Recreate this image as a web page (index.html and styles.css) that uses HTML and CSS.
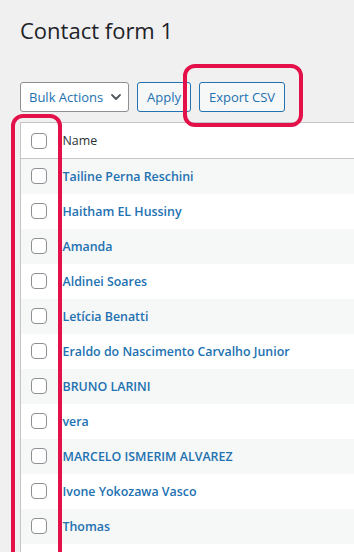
FILE: index.html
```html
<!DOCTYPE html>
<html lang="pt-BR">
<head>
    <meta charset="UTF-8">
    <meta name="viewport" content="width=device-width, initial-scale=1.0">
    <title>Contact form 1</title>
    <link rel="stylesheet" href="styles.css">
</head>
<body>
    <div class="wrap">
        <h1 class="page-title">Contact form 1</h1>

        <!-- barra de ações acima da tabela -->
        <div class="tablenav">
            <div class="select-box">
                <span>Bulk Actions</span>
                <svg class="chevron" width="12" height="12" viewBox="0 0 12 12">
                    <path d="M2 4 L6 8 L10 4" fill="none" stroke="#50575e" stroke-width="1.8" stroke-linecap="round" stroke-linejoin="round"/>
                </svg>
            </div>
            <button class="button">Apply</button>
            <button class="button">Export CSV</button>
        </div>

        <table class="entries">
            <thead>
                <tr>
                    <td class="check-column"><span class="checkbox"></span></td>
                    <th class="name-column">Name</th>
                </tr>
            </thead>
            <tbody>
                <tr><td class="check-column"><span class="checkbox"></span></td><td><a href="#">Tailine Perna Reschini</a></td></tr>
                <tr><td class="check-column"><span class="checkbox"></span></td><td><a href="#">Haitham EL Hussiny</a></td></tr>
                <tr><td class="check-column"><span class="checkbox"></span></td><td><a href="#">Amanda</a></td></tr>
                <tr><td class="check-column"><span class="checkbox"></span></td><td><a href="#">Aldinei Soares</a></td></tr>
                <tr><td class="check-column"><span class="checkbox"></span></td><td><a href="#">Letícia Benatti</a></td></tr>
                <tr><td class="check-column"><span class="checkbox"></span></td><td><a href="#">Eraldo do Nascimento Carvalho Junior</a></td></tr>
                <tr><td class="check-column"><span class="checkbox"></span></td><td><a href="#">BRUNO LARINI</a></td></tr>
                <tr><td class="check-column"><span class="checkbox"></span></td><td><a href="#">vera</a></td></tr>
                <tr><td class="check-column"><span class="checkbox"></span></td><td><a href="#">MARCELO ISMERIM ALVAREZ</a></td></tr>
                <tr><td class="check-column"><span class="checkbox"></span></td><td><a href="#">Ivone Yokozawa Vasco</a></td></tr>
                <tr><td class="check-column"><span class="checkbox"></span></td><td><a href="#">Thomas</a></td></tr>
                <tr><td class="check-column"><span class="checkbox"></span></td><td></td></tr>
            </tbody>
        </table>

        <!-- marcações vermelhas do print -->
        <div class="mark mark-export"></div>
        <div class="mark mark-checks"></div>
    </div>
</body>
</html>
```

FILE: styles.css
```css
* {
    margin: 0;
    padding: 0;
    box-sizing: border-box;
}

body {
    font-family: 'Open Sans', 'Noto Sans', Arial, sans-serif;
    background: #f0f0f1;
    color: #2c3338;
    overflow: hidden;
}

.wrap {
    position: relative;
    padding: 15px 0 0 20px;
}

.page-title {
    font-size: 22px;
    font-weight: 400;
    line-height: 30px;
    color: #1d2327;
    margin-bottom: 37px;
}

.tablenav {
    display: flex;
    align-items: center;
    gap: 8px;
    height: 30px;
    margin-bottom: 10px;
}

.select-box {
    display: flex;
    align-items: center;
    justify-content: space-between;
    width: 109px;
    height: 30px;
    padding: 0 6px 0 8px;
    background: white;
    border: 1px solid #8c8f94;
    border-radius: 3px;
    color: #2271b1;
    font-size: 13px;
}

.button {
    font-family: inherit;
    height: 30px;
    padding: 0 9px;
    background: #f6f7f7;
    border: 1px solid #2271b1;
    border-radius: 3px;
    color: #2271b1;
    font-size: 13px;
}

.entries {
    width: 100%;
    border-collapse: collapse;
    background: white;
    border-top: 1px solid #c3c4c7;
    border-left: 1px solid #c3c4c7;
}

.entries thead tr {
    height: 36px;
    border-bottom: 1px solid #c3c4c7;
}

.entries tbody tr {
    height: 35px;
}

.entries tbody tr:nth-child(odd) {
    background: #f6f7f7;
}

.entries td, .entries th {
    vertical-align: middle;
    text-align: left;
    font-size: 12.4px;
}

.check-column {
    width: 42px;
    padding-left: 10px;
}

.checkbox {
    display: block;
    width: 16px;
    height: 16px;
    border: 1px solid #8c8f94;
    border-radius: 4px;
    background: white;
}

.name-column {
    font-weight: 400;
    font-size: 13.5px;
    color: #2c3338;
}

.entries a {
    color: #2271b1;
    font-weight: 600;
    text-decoration: none;
}

.mark {
    position: absolute;
    border: 4px solid #e3104a;
    border-radius: 12px;
}

.mark-export {
    left: 183px;
    top: 64px;
    width: 120px;
    height: 63px;
}

.mark-checks {
    left: 11px;
    top: 114px;
    width: 51px;
    height: 480px;
}
```
